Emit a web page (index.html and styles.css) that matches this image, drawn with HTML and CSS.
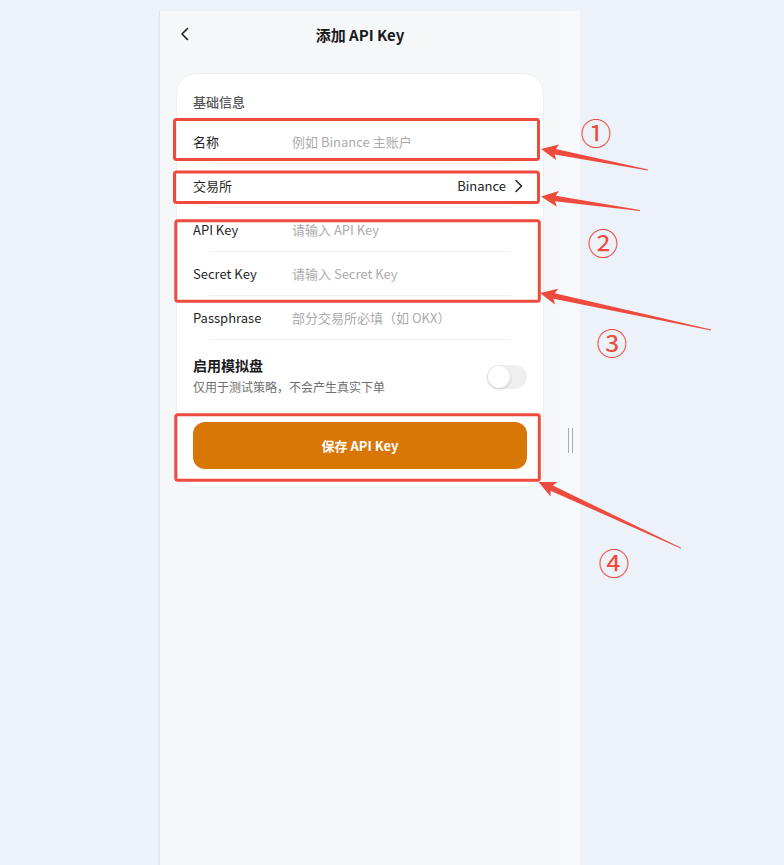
FILE: index.html
```html
<!DOCTYPE html>
<html lang="zh-CN">
<head>
<meta charset="utf-8">
<title>添加 API Key</title>
<link rel="stylesheet" href="styles.css">
</head>
<body>
<div class="stage">
  <div class="frame">
    <div class="phone">
      <header class="topbar">
        <span class="back">
          <svg width="10" height="14" viewBox="0 0 10 14"><polyline points="7.5,1.5 2,7 7.5,12.5" fill="none" stroke="#222" stroke-width="1.6" stroke-linecap="round" stroke-linejoin="round"/></svg>
        </span>
        <h1 class="title">添加 API Key</h1>
        <span></span>
      </header>

      <section class="card">
        <div class="section-title">基础信息</div>

        <div class="field">
          <div class="field-main"><span class="label">名称</span><span class="placeholder">例如 Binance 主账户</span></div>
          <div class="rule"></div>
        </div>
        <div class="field">
          <div class="field-main"><span class="label">交易所</span><span class="value">Binance
            <svg width="9" height="14" viewBox="0 0 9 14"><polyline points="2,1.5 7.5,7 2,12.5" fill="none" stroke="#222" stroke-width="1.5" stroke-linecap="round" stroke-linejoin="round"/></svg></span></div>
          <div class="rule"></div>
        </div>
        <div class="field">
          <div class="field-main"><span class="label">API Key</span><span class="placeholder">请输入 API Key</span></div>
          <div class="rule"></div>
        </div>
        <div class="field">
          <div class="field-main"><span class="label">Secret Key</span><span class="placeholder">请输入 Secret Key</span></div>
          <div class="rule"></div>
        </div>
        <div class="field">
          <div class="field-main"><span class="label">Passphrase</span><span class="placeholder">部分交易所必填（如 OKX）</span></div>
          <div class="rule"></div>
        </div>

        <div class="sim">
          <div class="sim-text">
            <div class="sim-title">启用模拟盘</div>
            <div class="sim-desc">仅用于测试策略，不会产生真实下单</div>
          </div>
          <div class="toggle"><div class="knob"></div></div>
        </div>

        <button class="save">保存 API Key</button>
      </section>
    </div>
    <div class="side"><div class="handle"></div></div>
  </div>
</div>

<svg class="annot" width="784" height="865" viewBox="0 0 784 865">
  <g fill="none" stroke="#ee4a3d" stroke-width="3" stroke-linejoin="round">
    <rect x="174.5" y="119.5" width="364" height="40" rx="2"/>
    <rect x="174.5" y="172" width="364" height="30.5" rx="2"/>
    <rect x="175.8" y="220.8" width="363.5" height="80.4" rx="2"/>
    <rect x="175.8" y="414.8" width="363.5" height="65.4" rx="2"/>
  </g>
  <g fill="#ee4a3d">
    <polygon transform="translate(541,149) rotate(11.1)" points="0,0 17,-8 14.5,-2.8 109,-0.5 109,0.5 14.5,2.8 17,8"/>
    <polygon transform="translate(541,196.5) rotate(8)" points="0,0 17,-8 14.5,-2.8 100,-0.5 100,0.5 14.5,2.8 17,8"/>
    <polygon transform="translate(540,293) rotate(12.2)" points="0,0 17,-8 14.5,-2.8 175,-0.5 175,0.5 14.5,2.8 17,8"/>
    <polygon transform="translate(538.5,482) rotate(24.9)" points="0,0 17,-8 14.5,-2.8 157,-0.5 157,0.5 14.5,2.8 17,8"/>
  </g>
  <g class="num" fill="#ee4a3d" text-anchor="middle" dominant-baseline="central">
    <text x="596" y="131">①</text>
    <text x="603" y="241">②</text>
    <text x="612" y="341">③</text>
    <text x="614" y="561">④</text>
  </g>
</svg>
</body>
</html>
```
FILE: styles.css
```css
* { box-sizing: border-box; }
html, body { margin: 0; padding: 0; }
body {
  width: 784px;
  height: 865px;
  overflow: hidden;
  background: #edf1f8;
  font-family: "Noto Sans CJK SC", "Noto Sans", sans-serif;
  color: #1f1f1f;
  position: relative;
}
.stage {
  padding: 11px 0 0 160px;
}
.frame {
  display: flex;
  height: 858px;
}
.phone {
  width: 400px;
  background: #f6f7f9;
  box-shadow: -1px 0 1px rgba(0,0,0,0.06);
  display: flex;
  flex-direction: column;
}
.side {
  width: 20px;
  background: #f8f9fd;
  display: flex;
  align-items: center;
  justify-content: center;
}
.handle {
  width: 5px;
  height: 25px;
  border-left: 1.5px solid #a9abb0;
  border-right: 1.5px solid #a9abb0;
}
.topbar {
  height: 46px;
  display: grid;
  grid-template-columns: 60px 1fr 60px;
  align-items: center;
}
.back {
  margin-left: 20px;
  display: flex;
  align-items: center;
}
.title {
  margin: 0;
  text-align: center;
  font-size: 15px;
  font-weight: 700;
  color: #1a1a1a;
}
.card {
  margin: 16px 16px 0;
  background: #fff;
  border: 1px solid #eceef2;
  border-radius: 20px;
  padding: 19px 16px 18px;
}
.section-title {
  font-size: 13px;
  line-height: 18px;
  font-weight: 500;
  color: #555;
  margin-bottom: 9px;
}
.field-main {
  height: 43px;
  display: flex;
  align-items: center;
  font-size: 13px;
}
.label {
  width: 99px;
  flex: none;
  color: #1f1f1f;
}
.placeholder {
  color: #ababab;
}
.value {
  margin-left: auto;
  margin-right: 4px;
  display: flex;
  align-items: center;
  gap: 8px;
  color: #222;
}
.rule {
  height: 1px;
  margin: 0 16px;
  background: #eff0f2;
}
.sim {
  display: flex;
  align-items: center;
  padding-top: 16px;
}
.sim-text {
  flex: 1;
}
.sim-title {
  font-size: 14px;
  line-height: 18px;
  font-weight: 700;
  color: #1a1a1a;
}
.sim-desc {
  font-size: 12px;
  line-height: 16px;
  margin-top: 5px;
  color: #6f6f6f;
}
.toggle {
  width: 40px;
  height: 24px;
  border-radius: 12px;
  background: #efefef;
  padding: 1px;
  margin-top: 2px;
}
.knob {
  width: 22px;
  height: 22px;
  border-radius: 50%;
  background: #fff;
  box-shadow: 0 1px 3px rgba(0,0,0,0.2);
}
.save {
  display: block;
  width: 100%;
  height: 47px;
  margin-top: 27px;
  border: none;
  border-radius: 12px;
  background: #d97706;
  color: #fff;
  font-family: inherit;
  font-size: 13px;
  font-weight: 700;
}
.annot {
  position: absolute;
  left: 0;
  top: 0;
  pointer-events: none;
}
.num text {
  font-family: "Noto Sans CJK SC", sans-serif;
  font-size: 31px;
}
```
